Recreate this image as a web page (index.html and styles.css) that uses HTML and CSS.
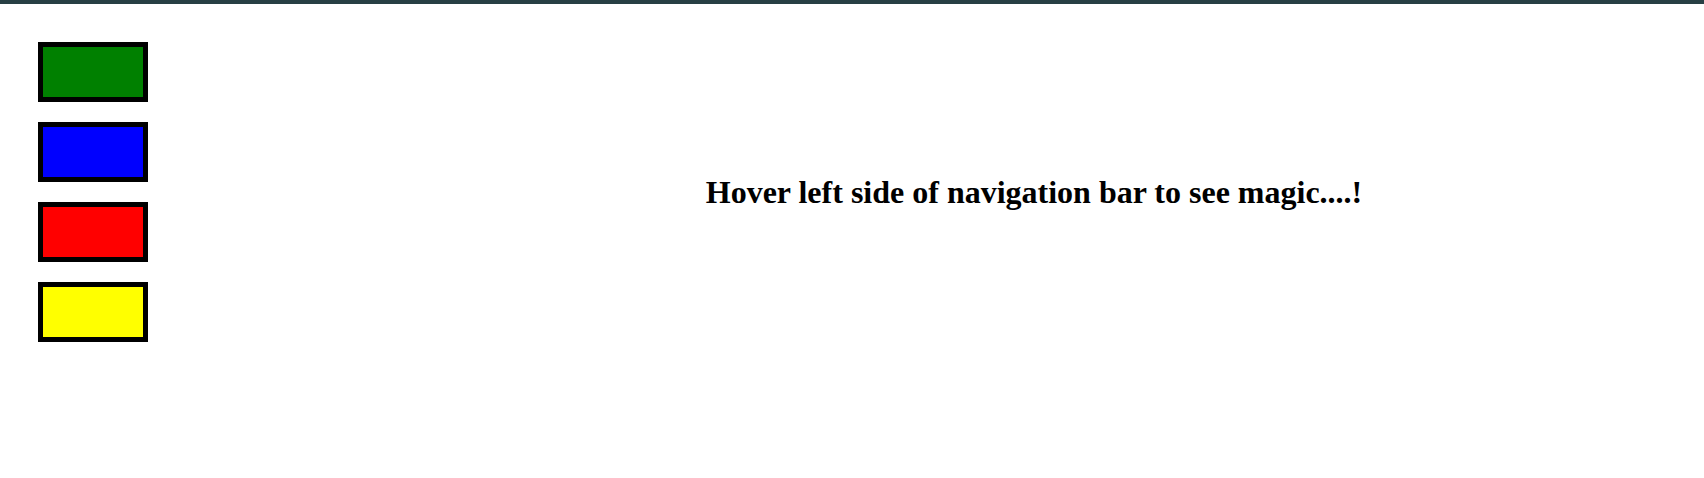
FILE: index.html
```html
<!DOCTYPE html>
<html>
<head>
<meta charset="utf-8">
<link rel="stylesheet" href="styles.css">
</head>
<body>
<div class="topbar"></div>
<div class="layout">
  <nav class="sidebar">
    <div class="box green"></div>
    <div class="box blue"></div>
    <div class="box red"></div>
    <div class="box yellow"></div>
  </nav>
  <main class="main">
    <h1 class="title">Hover left side of navigation bar to see magic....!</h1>
  </main>
</div>
</body>
</html>
```
FILE: styles.css
```css
html, body {
  margin: 0;
  padding: 0;
  background: #ffffff;
  font-family: "Liberation Serif", "Times New Roman", serif;
}
.topbar {
  height: 4px;
  background: #273f44;
}
.layout {
  display: flex;
}
.sidebar {
  width: 364px;
  flex: none;
  box-sizing: border-box;
  padding: 38px 0 0 38px;
  display: flex;
  flex-direction: column;
  gap: 20px;
}
.box {
  width: 100px;
  height: 50px;
  border: 5px solid #000000;
}
.green { background: #008000; }
.blue { background: #0000ff; }
.red { background: #ff0000; }
.yellow { background: #ffff00; }
.main {
  flex: 1;
  text-align: center;
  padding-top: 170px;
}
.title {
  margin: 0;
  font-size: 32px;
  font-weight: bold;
  color: #000000;
}
```
